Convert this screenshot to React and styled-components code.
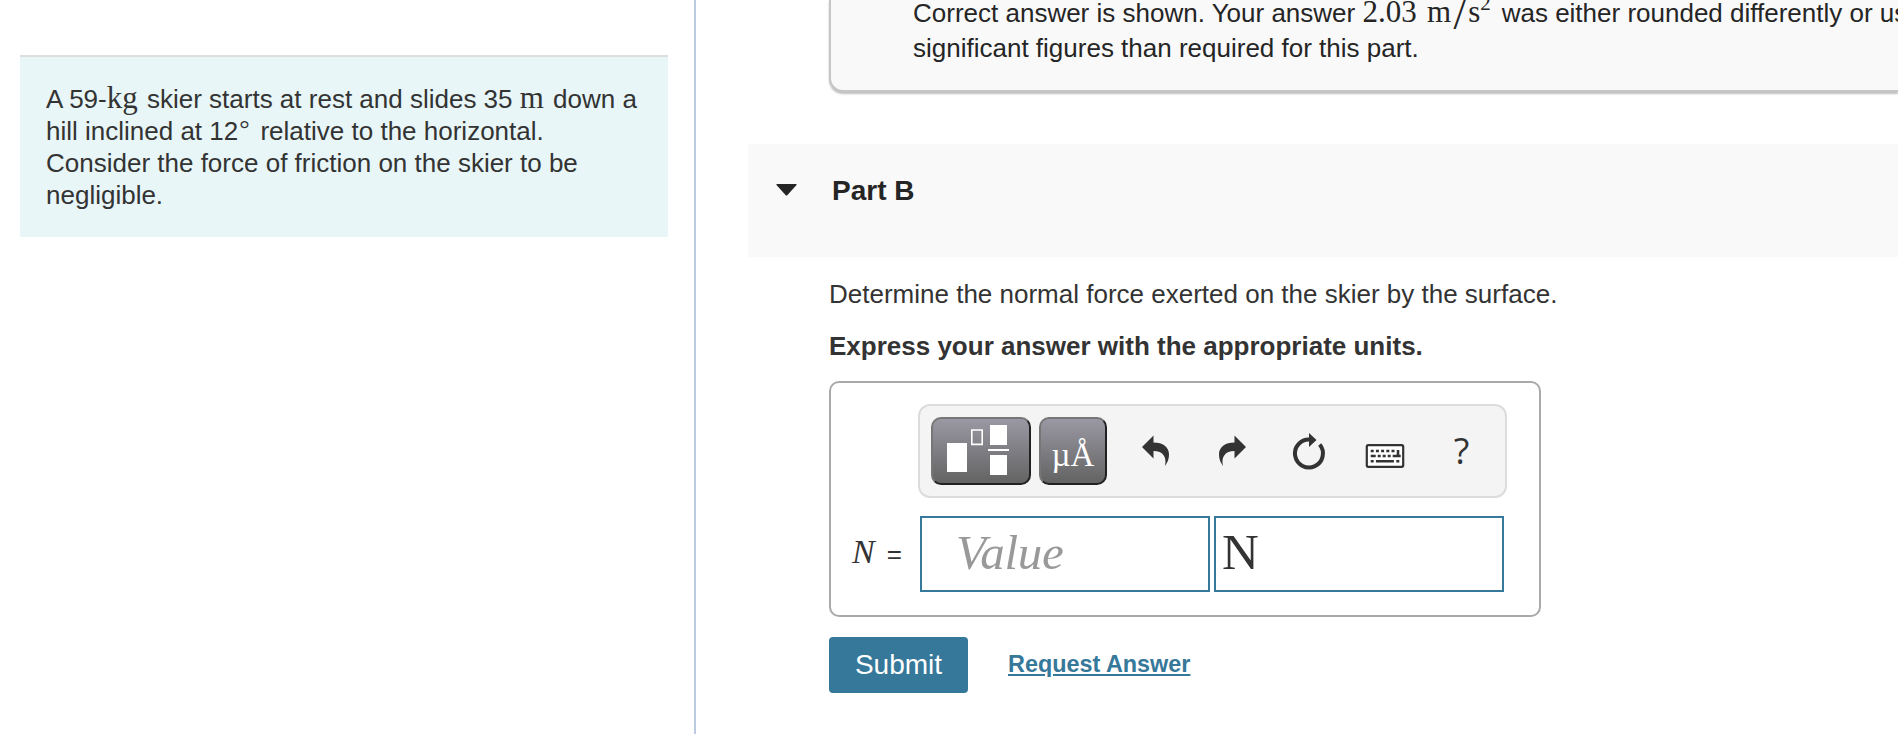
import React from "react";
import styled, { createGlobalStyle } from "styled-components";

const GlobalStyle = createGlobalStyle`
  * {
    box-sizing: border-box;
  }

  body {
    margin: 0;
    overflow: hidden;
    background: #fff;
    color: #333;
    font: 26px/32px "Liberation Sans", Arial, sans-serif;
  }

  p {
    margin: 0;
  }
`;

const Page = styled.div`
  display: flex;
  height: 734px;
  overflow: hidden;
`;

const Sidebar = styled.aside`
  width: 696px;
  flex-shrink: 0;
  padding: 55px 26px 0 20px;
  border-right: 2px solid #bccadf;
`;

const Introduction = styled.div`
  padding: 26px 0 26px 26px;
  border-top: 2px solid #dedede;
  background: #e8f6f7;
  white-space: nowrap;
`;

const Main = styled.main`
  flex: 1;
  min-width: 0;
  padding-left: 52px;
`;

const Feedback = styled.div`
  height: 92px;
  margin-left: 81px;
  padding-left: 82px;
  overflow: hidden;
  border: solid #c6c6c6;
  border-width: 0 0 2px 2px;
  border-radius: 0 0 0 14px;
  background: #f9f9f9;
  box-shadow: 0 2px 2px rgba(0, 0, 0, 0.25);
  color: #252525;
  line-height: 35px;
  white-space: nowrap;

  p {
    margin-top: -4px;
  }
`;

const MathText = styled.span`
  display: inline-block;
  width: ${({ $width }) => $width}px;
  font-family: "Liberation Serif", "Times New Roman", serif;
  font-size: ${({ $size }) => $size || 31}px;
  line-height: 0;
`;

const Degree = styled(MathText)`
  padding-left: 1px;
  font-size: 26px;
  vertical-align: 3px;
`;

const Slash = styled.span`
  display: inline-block;
  width: 17px;
  font-size: 44px;
  line-height: 0;
  text-align: center;
  vertical-align: -7px;
`;

const Superscript = styled.sup`
  font-size: 21px;
  line-height: 0;
  vertical-align: 12px;
`;

const PartHeader = styled.header`
  display: flex;
  height: 113px;
  margin-top: 52px;
  padding: 30px 0 0 28px;
  background: #f9f9f9;
  color: #252525;
`;

const Caret = styled.svg`
  width: 21px;
  height: 12px;
  margin-top: 10px;
`;

const PartTitle = styled.h2`
  margin: 0 0 0 35px;
  font-size: 28px;
  line-height: 34px;
`;

const PartBody = styled.section`
  padding: 21px 0 0 81px;
`;

const Instructions = styled.p`
  && {
    margin-top: 20px;
  }
  font-weight: bold;
`;

const AnswerBox = styled.div`
  width: 712px;
  height: 236px;
  margin-top: 19px;
  padding: 21px 0 0 21px;
  border: 2px solid #a9a9a9;
  border-radius: 10px;
`;

const Toolbar = styled.div`
  display: flex;
  width: 589px;
  height: 94px;
  margin-left: 66px;
  padding: 11px 0 11px 11px;
  border: 2px solid #dcdcdc;
  border-radius: 12px;
  background: #f4f4f4;
`;

const TemplateButton = styled.button`
  display: flex;
  flex-shrink: 0;
  align-items: center;
  justify-content: center;
  width: ${({ $width }) => $width}px;
  height: 68px;
  margin: 0 8px 0 0;
  padding: 0;
  border: 2px solid;
  border-color: #767676 #212121 #212121 #767676;
  border-radius: 10px;
  background: linear-gradient(#9a98a3, #636363);
  color: #fff;
  font: 33px/36px "Liberation Serif", "Times New Roman", serif;
`;

const UnitSymbols = styled.span`
  padding-top: 7px;
`;

const ToolButton = styled.button`
  display: flex;
  flex-shrink: 0;
  align-items: center;
  justify-content: center;
  width: 76px;
  height: 68px;
  margin: 0;
  padding: 0 0 0 ${({ $indent }) => $indent || 0}px;
  border: 0;
  background: none;
  color: #333;
  font: 36px/68px "Open Sans", sans-serif;
`;

const Tools = styled.div`
  display: flex;
  margin-left: 3px;
`;

const ToolIcon = styled.svg`
  width: 40px;
  height: 40px;
  overflow: visible;
`;

const AnswerRow = styled.div`
  display: flex;
  align-items: center;
  margin-top: 18px;
`;

const AnswerLabel = styled.label`
  width: 68px;
  padding-bottom: 2px;
  white-space: nowrap;
`;

const Variable = styled.i`
  margin-right: 12px;
  font: italic 34px/32px "Liberation Serif", "Times New Roman", serif;
`;

const AnswerInput = styled.input`
  width: 290px;
  height: 76px;
  margin-right: 4px;
  padding: 0 0 4px ${({ $indent }) => $indent}px;
  border: 2px solid #36799b;
  border-radius: 0;
  outline: 0;
  background: #fff;
  color: #333;
  font: 51px "Liberation Serif", "Times New Roman", serif;

  &::placeholder {
    color: #999;
    font-style: italic;
    font-size: 49px;
    letter-spacing: -0.3px;
    opacity: 1;
  }
`;

const Actions = styled.div`
  display: flex;
  align-items: center;
  margin-top: 20px;
`;

const SubmitButton = styled.button`
  width: 139px;
  height: 56px;
  padding: 0;
  border: 0;
  border-radius: 4px;
  background: #36789a;
  color: #fff;
  font: 28px "Liberation Sans", Arial, sans-serif;
`;

const RequestLink = styled.a`
  margin: 0 0 3px 40px;
  color: #36789a;
  font-size: 23.4px;
  font-weight: bold;
  text-decoration: underline;
  text-decoration-thickness: 2px;
  text-underline-offset: 2px;
`;

const TemplatesIcon = styled.svg`
  width: 62px;
  height: 52px;
  margin-right: 6px;
  fill: #fff;
`;

const UndoIcon = () => (
  <ToolIcon viewBox="0 0 40 40" fill="currentColor">
    <path d="M6 16 17.5 4.5v7C27 11.5 33 16 33 23.5c0 4.5-1.5 8-4 11.5C31 26 27 20 17.5 20v7.5z" />
  </ToolIcon>
);

const RedoIcon = () => (
  <ToolIcon viewBox="0 0 40 40" fill="currentColor">
    <path d="M34 16 22.5 4.5v7C13 11.5 7 16 7 23.5c0 4.5 1.5 8 4 11.5C9 26 13 20 22.5 20v7.5z" />
  </ToolIcon>
);

const ResetIcon = () => (
  <ToolIcon viewBox="0 0 40 40">
    <path
      d="M22 8.5A14 14 0 1 0 31.7 13.5"
      fill="none"
      stroke="currentColor"
      strokeWidth="4"
    />
    <path d="M21 2l7.5 7L21 16z" fill="currentColor" />
  </ToolIcon>
);

const KeyboardIcon = () => (
  <ToolIcon viewBox="0 0 40 40">
    <rect x="2.8" y="14.2" width="36.4" height="21.6" rx="1.5" fill="#fff" stroke="currentColor" strokeWidth="2.2" />
    <g fill="none" stroke="currentColor" strokeWidth="2.4">
      <path d="M6.7 20h24" strokeDasharray="3 2.2" />
      <path d="M6.7 25h5m2 0h3m2 0h3m2 0h3m2 0h8" />
      <path d="M34 19v7" strokeWidth="2.6" />
      <path d="M6.7 30.2h3m2.2 0h18m2.4 0h3" />
    </g>
  </ToolIcon>
);

const AnswerTools = () => (
  <Toolbar>
    <TemplateButton $width={100} aria-label="Templates">
      <TemplatesIcon viewBox="0 0 62 52">
        <path d="M0 18h20v29H0zM43 0h17v20H43zM41 24h21v2H41zM43 30h17v20H43z" />
        <path d="M24.8 5h10.4v14.4H24.8z" fill="none" stroke="#fff" strokeWidth="1.6" />
      </TemplatesIcon>
    </TemplateButton>
    <TemplateButton $width={68}>
      <UnitSymbols>µÅ</UnitSymbols>
    </TemplateButton>
    <Tools>
      <ToolButton aria-label="Undo">
        <UndoIcon />
      </ToolButton>
      <ToolButton aria-label="Redo">
        <RedoIcon />
      </ToolButton>
      <ToolButton aria-label="Reset">
        <ResetIcon />
      </ToolButton>
      <ToolButton aria-label="Keyboard">
        <KeyboardIcon />
      </ToolButton>
      <ToolButton $indent={3}>?</ToolButton>
    </Tools>
  </Toolbar>
);

const App = () => (
  <>
    <GlobalStyle />
    <Page>
      <Sidebar>
        <Introduction>
          A 59-<MathText $width={33}>kg</MathText> skier starts at rest and slides 35{" "}
          <MathText $width={26}>m</MathText> down a
          <br />
          hill inclined at 12<Degree $width={15}>°</Degree> relative to the horizontal.
          <br />
          Consider the force of friction on the skier to be
          <br />
          negligible.
        </Introduction>
      </Sidebar>
      <Main>
        <Feedback>
          <p>
            Correct answer is shown. Your answer{" "}
            <MathText $width={132}>
              2.03&nbsp;&#8202;m<Slash>/</Slash>s<Superscript>2</Superscript>
            </MathText>{" "}
            was either rounded differently or used a different number of
            <br />
            significant figures than required for this part.
          </p>
        </Feedback>
        <PartHeader>
          <Caret viewBox="0 0 21 12">
            <path d="M1 0h19q1 0 .5 1L11.5 11q-1 1-2 0L.5 1Q0 0 1 0z" fill="currentColor" />
          </Caret>
          <PartTitle>Part B</PartTitle>
        </PartHeader>
        <PartBody>
          <p>Determine the normal force exerted on the skier by the surface.</p>
          <Instructions>Express your answer with the appropriate units.</Instructions>
          <AnswerBox>
            <AnswerTools />
            <AnswerRow>
              <AnswerLabel htmlFor="value">
                <Variable>N</Variable>=
              </AnswerLabel>
              <AnswerInput id="value" placeholder="Value" $indent={34} />
              <AnswerInput defaultValue="N" $indent={6} aria-label="Units" />
            </AnswerRow>
          </AnswerBox>
          <Actions>
            <SubmitButton>Submit</SubmitButton>
            <RequestLink href="#">Request Answer</RequestLink>
          </Actions>
        </PartBody>
      </Main>
    </Page>
  </>
);

export default App;
